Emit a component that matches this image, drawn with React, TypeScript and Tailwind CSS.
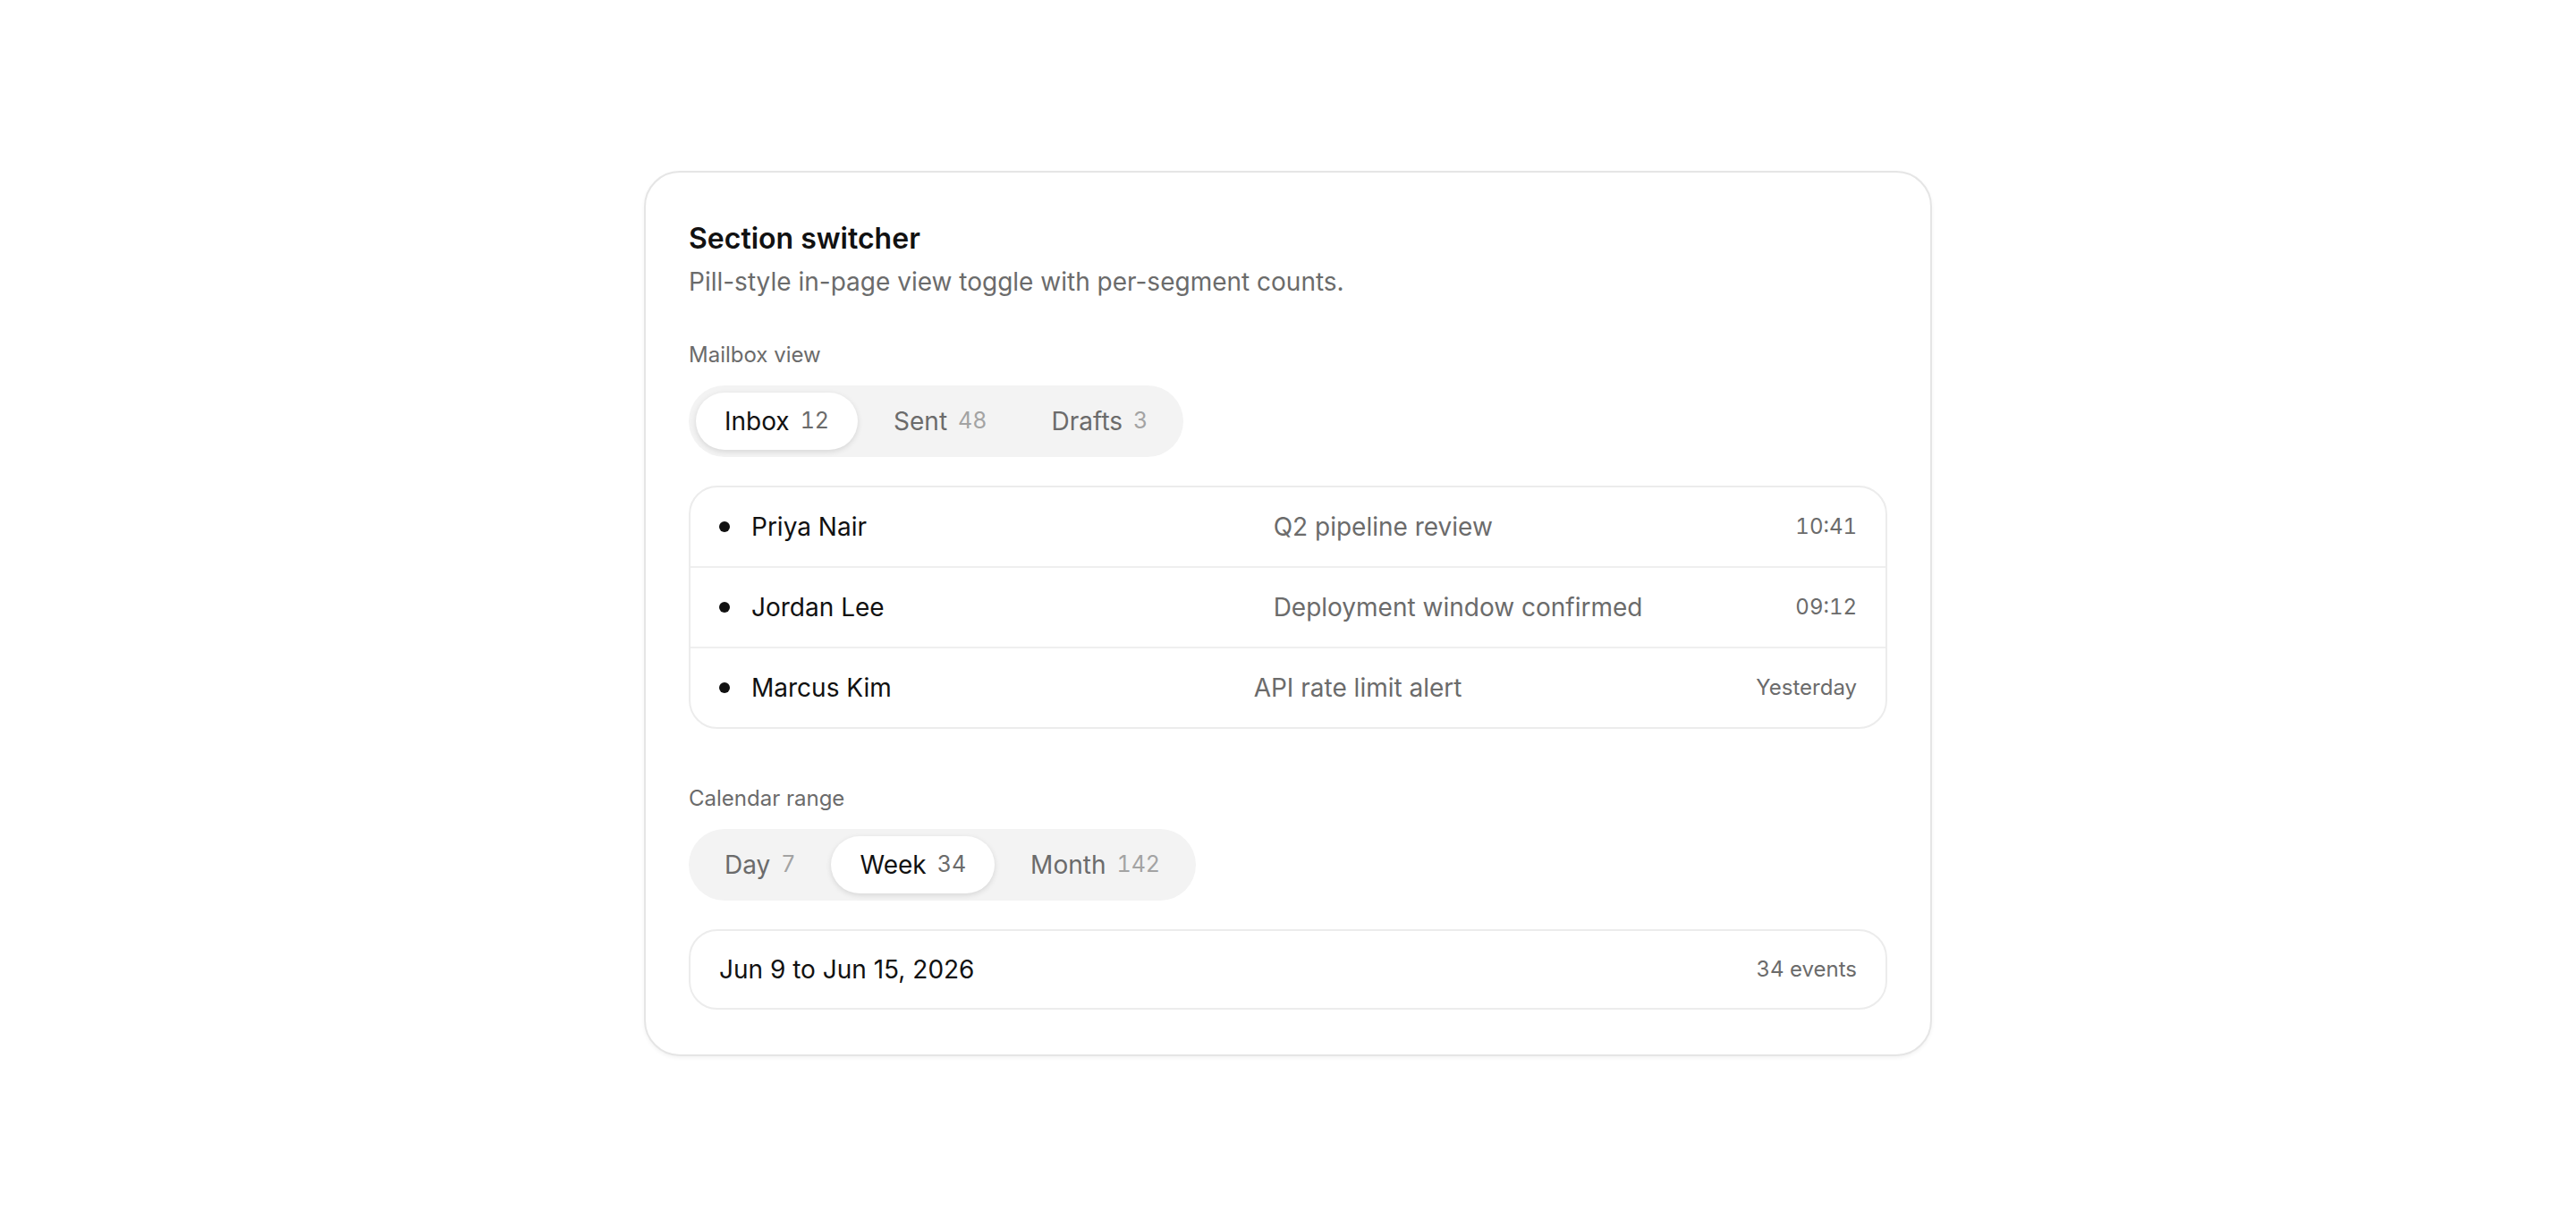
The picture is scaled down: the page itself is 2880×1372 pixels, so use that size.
import { useState } from "react";

type Segment = { key: string; label: string; count: number };

const mailboxSegments: Segment[] = [
  { key: "inbox", label: "Inbox", count: 12 },
  { key: "sent", label: "Sent", count: 48 },
  { key: "drafts", label: "Drafts", count: 3 },
];

const rangeSegments: Segment[] = [
  { key: "day", label: "Day", count: 7 },
  { key: "week", label: "Week", count: 34 },
  { key: "month", label: "Month", count: 142 },
];

const messages = [
  { from: "Priya Nair", subject: "Q2 pipeline review", time: "10:41" },
  { from: "Jordan Lee", subject: "Deployment window confirmed", time: "09:12" },
  { from: "Marcus Kim", subject: "API rate limit alert", time: "Yesterday" },
];

function PillSwitch({
  segments,
  value,
  onChange,
}: {
  segments: Segment[];
  value: string;
  onChange: (key: string) => void;
}) {
  return (
    <div className="inline-flex items-center gap-2 rounded-full bg-[#f3f3f3] p-2">
      {segments.map((s) => {
        const active = s.key === value;
        return (
          <button
            key={s.key}
            onClick={() => onChange(s.key)}
            className={
              active
                ? "flex h-16 items-center gap-3 rounded-full bg-white px-8 text-[28px] text-[#111] shadow-[0_2px_6px_rgba(0,0,0,0.12)] cursor-pointer"
                : "flex h-16 items-center gap-3 rounded-full px-8 text-[28px] text-[#6b6b6b] cursor-pointer"
            }
          >
            <span>{s.label}</span>
            <span
              className={
                active
                  ? "text-[25px] tabular-nums text-[#6b6b6b]"
                  : "text-[25px] tabular-nums text-[#a3a3a3]"
              }
            >
              {s.count}
            </span>
          </button>
        );
      })}
    </div>
  );
}

export default function App() {
  const [mailbox, setMailbox] = useState("inbox");
  const [range, setRange] = useState("week");

  return (
    <div className="flex min-h-screen items-center justify-center bg-white font-['Inter',sans-serif]">
      <div className="w-[1440px] rounded-[40px] border-2 border-[#e5e5e5] bg-white px-12 pt-[50px] pb-[50px] shadow-[0_2px_4px_rgba(0,0,0,0.05)]">
        <h2 className="text-[32px] leading-[48px] font-semibold text-[#111]">Section switcher</h2>
        <p className="mt-1 text-[28px] leading-[40px] text-[#6b6b6b]">
          Pill-style in-page view toggle with per-segment counts.
        </p>

        <div className="mt-[44px]">
          <div className="mb-4 text-[24px] leading-[36px] text-[#6b6b6b]">Mailbox view</div>
          <PillSwitch segments={mailboxSegments} value={mailbox} onChange={setMailbox} />
          <div className="mt-8 rounded-[32px] border-2 border-[#ececec]">
            {messages.map((m, i) => (
              <div
                key={m.from}
                className={
                  i === 0
                    ? "flex h-[88px] items-center gap-6 px-8"
                    : "flex h-[90px] items-center gap-6 border-t-2 border-[#efefef] px-8"
                }
              >
                <span className="h-3 w-3 shrink-0 rounded-full bg-[#111]" />
                <span className="flex-1 text-[28px] text-[#111]">{m.from}</span>
                <span className="flex-1 text-[28px] text-[#6b6b6b]">{m.subject}</span>
                <span className="shrink-0 text-[24px] tabular-nums text-[#6b6b6b]">{m.time}</span>
              </div>
            ))}
          </div>
        </div>

        <div className="mt-[60px]">
          <div className="mb-4 text-[24px] leading-[36px] text-[#6b6b6b]">Calendar range</div>
          <PillSwitch segments={rangeSegments} value={range} onChange={setRange} />
          <div className="mt-8 flex h-[90px] items-center justify-between rounded-[32px] border-2 border-[#ececec] px-8">
            <span className="text-[28px] text-[#111]">Jun 9 to Jun 15, 2026</span>
            <span className="text-[24px] tabular-nums text-[#6b6b6b]">34 events</span>
          </div>
        </div>
      </div>
    </div>
  );
}
